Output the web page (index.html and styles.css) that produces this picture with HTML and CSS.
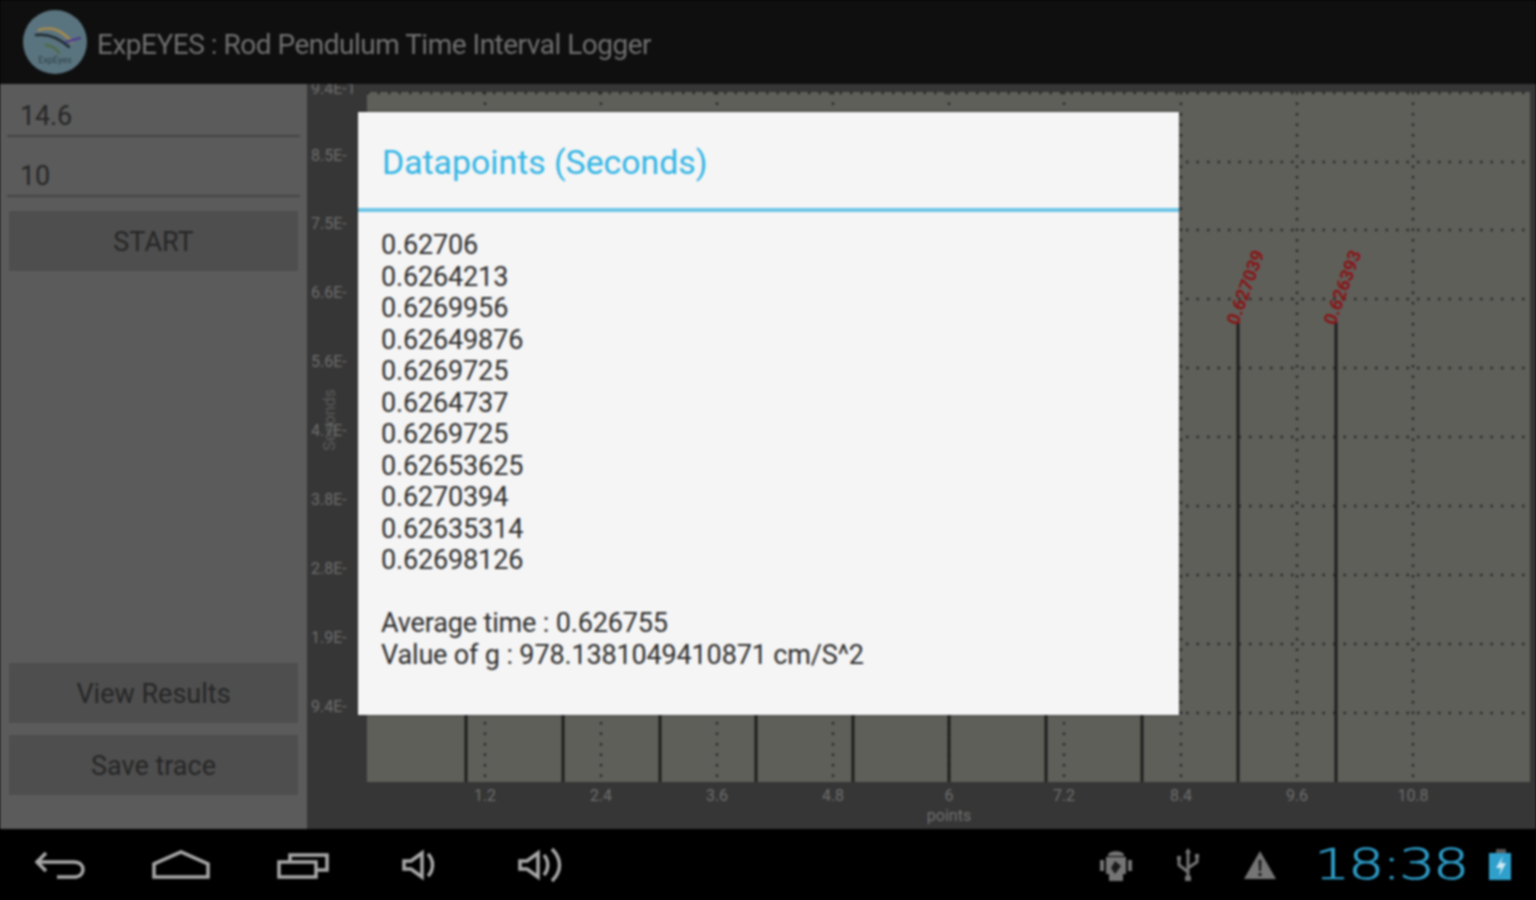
FILE: index.html
```html
<!DOCTYPE html>
<html lang="en">
<head>
    <meta charset="UTF-8">
    <meta name="viewport" content="width=device-width, initial-scale=1.0">
    <title>ExpEYES : Rod Pendulum Time Interval Logger</title>
    <link rel="stylesheet" href="styles.css">
</head>
<body>

<div class="screen">
    <header class="action-bar">
        <svg class="app-logo" viewBox="0 0 66 66">
            <circle cx="33" cy="33" r="32" fill="#5a747f"/>
            <path class="wing wing-orange" d="M17 21 C32 16 42 24 50 33"/>
            <path class="wing wing-dark" d="M14 26 C28 24 38 30 47 38"/>
            <path class="wing wing-purple" d="M44 33 L58 29"/>
            <path class="wing wing-green" d="M24 36 C30 37 35 40 37 44"/>
            <text class="logo-text" x="33" y="54">ExpEyes</text>
        </svg>
        <h1 class="app-title">ExpEYES : Rod Pendulum Time Interval Logger</h1>
    </header>

    <main class="content">
        <aside class="side-panel">
            <div class="field">14.6</div>
            <div class="field">10</div>
            <button class="panel-btn start-btn">START</button>
            <button class="panel-btn results-btn">View Results</button>
            <button class="panel-btn">Save trace</button>
        </aside>

        <section class="chart">
            <svg class="chart-svg" viewBox="307 84 1229 745">
                <rect class="plot" x="367" y="92" width="1163" height="690"/>

                <path class="grid" d="M367 93H1530M367 162H1530M367 230H1530M367 299H1530M367 368H1530M367 437H1530M367 506H1530M367 575H1530M367 644H1530M367 713H1530"/>
                <path class="grid" d="M485 92V782M601 92V782M717 92V782M833 92V782M949 92V782M1064 92V782M1181 92V782M1297 92V782M1413 92V782"/>

                <path class="bar" d="M466 322V782M563 322V782M660 322V782M756 322V782M853 322V782M949 322V782M1046 322V782M1142 322V782M1238 322V782M1336 322V782"/>

                <text class="peak" transform="translate(1238 326) rotate(-70)">0.627039</text>
                <text class="peak" transform="translate(1335 326) rotate(-70)">0.626393</text>

                <text class="tick" x="311" y="94">9.4E-1</text>
                <text class="tick" x="311" y="161">8.5E-</text>
                <text class="tick" x="311" y="229">7.5E-</text>
                <text class="tick" x="311" y="298">6.6E-</text>
                <text class="tick" x="311" y="367">5.6E-</text>
                <text class="tick" x="311" y="436">4.7E-</text>
                <text class="tick" x="311" y="505">3.8E-</text>
                <text class="tick" x="311" y="574">2.8E-</text>
                <text class="tick" x="311" y="643">1.9E-</text>
                <text class="tick" x="311" y="712">9.4E-</text>

                <text class="tick mid" x="485" y="801">1.2</text>
                <text class="tick mid" x="601" y="801">2.4</text>
                <text class="tick mid" x="717" y="801">3.6</text>
                <text class="tick mid" x="833" y="801">4.8</text>
                <text class="tick mid" x="949" y="801">6</text>
                <text class="tick mid" x="1064" y="801">7.2</text>
                <text class="tick mid" x="1181" y="801">8.4</text>
                <text class="tick mid" x="1297" y="801">9.6</text>
                <text class="tick mid" x="1413" y="801">10.8</text>

                <text class="tick mid" x="949" y="821">points</text>
                <text class="axis-name mid" transform="translate(335 420) rotate(-90)">Seconds</text>
            </svg>
        </section>

        <div class="dialog">
            <h2 class="dialog-title">Datapoints (Seconds)</h2>
            <div class="dialog-body">
                <p>0.62706</p>
                <p>0.6264213</p>
                <p>0.6269956</p>
                <p>0.62649876</p>
                <p>0.6269725</p>
                <p>0.6264737</p>
                <p>0.6269725</p>
                <p>0.62653625</p>
                <p>0.6270394</p>
                <p>0.62635314</p>
                <p>0.62698126</p>
                <p class="blank">&nbsp;</p>
                <p>Average time : 0.626755</p>
                <p>Value of g : 978.1381049410871 cm/S^2</p>
            </div>
        </div>
    </main>

    <footer class="nav-bar">
        <div class="nav-left">
            <svg class="nav-icon" width="50" height="30" viewBox="0 0 50 30">
                <path d="M11 3L2 12L11 21M2 12H39C51 12 51 27 39 27H22"/>
            </svg>
            <svg class="nav-icon" width="58" height="30" viewBox="0 0 58 30">
                <path d="M2 27V14L29 2L56 14V27Z"/>
            </svg>
            <svg class="nav-icon" width="54" height="30" viewBox="0 0 54 30">
                <path d="M2 12H39V27H2ZM13 11V5H50V20H40"/>
            </svg>
            <svg class="nav-icon vol-down" width="36" height="32" viewBox="0 0 36 32">
                <path d="M2 12H9L20 4V28L9 20H2Z"/>
                <path d="M26 5C32 11 32 21 26 27"/>
            </svg>
            <svg class="nav-icon vol-up" width="46" height="36" viewBox="0 0 46 36">
                <path d="M2 14H9L20 6V30L9 22H2Z"/>
                <path d="M26 8C31 14 31 22 26 28"/>
                <path d="M34 2C44 12 44 24 34 34"/>
            </svg>
        </div>
        <div class="nav-right">
            <svg class="status-icon" width="34" height="36" viewBox="0 0 34 36">
                <path class="status-fill" d="M9 8C10 3 24 3 25 8V9H9ZM7 10H27V27H24V34H10V27H7ZM1 13H5V24H1ZM29 13H33V24H29Z"/>
                <path class="status-cut" d="M16 14L22 19L16 27L12 21Z"/>
            </svg>
            <svg class="status-icon" width="24" height="36" viewBox="0 0 24 36">
                <path class="status-line" d="M12 3V32M12 25L3 18V12M12 21L21 15V10"/>
                <path class="status-fill" d="M12 1L15 6H9ZM1 9H5V13H1ZM19 7H23V11H19ZM9 29H15V34H9Z"/>
            </svg>
            <svg class="status-icon" width="34" height="30" viewBox="0 0 34 30">
                <path class="status-fill" d="M17 1L33 29H1Z"/>
                <path class="status-cut" d="M15.500 10H18.500L18 21H16ZM15.500 23H18.500V26H15.500Z"/>
            </svg>
            <span class="clock"><span class="clock-text">18:38</span></span>
            <svg class="status-icon" width="26" height="34" viewBox="0 0 26 34">
                <path class="battery-cap" d="M8 1H18V5H8Z"/>
                <path class="battery" d="M1 5H23V32H1Z"/>
                <path class="bolt" d="M15 8L8 20H13L11 28L18 15H13Z"/>
            </svg>
        </div>
    </footer>
</div>

</body>
</html>
```

FILE: styles.css
```css
* {
    box-sizing: border-box;
}
html, body {
    margin: 0;
    height: 100%;
    background: #000;
}
body {
    font-family: Roboto, "Liberation Sans", sans-serif;
    overflow: hidden;
}
.screen {
    width: 1536px;
    height: 900px;
    display: flex;
    flex-direction: column;
    filter: blur(0.9px);
}

/* top bar */
.action-bar {
    height: 84px;
    flex: none;
    background-color: #0f0f0f;
    display: flex;
    align-items: center;
    padding-left: 22px;
    gap: 9px;
}
.app-logo {
    width: 66px;
    height: 66px;
}
.wing {
    fill: none;
    stroke-width: 2.5;
    stroke-linecap: round;
}
.wing-orange { stroke: #a98a4c; }
.wing-dark { stroke: #1f2a30; }
.wing-purple { stroke: #4d3f90; }
.wing-green { stroke: #4f6a45; }
.logo-text {
    font-size: 9px;
    fill: #2c3f48;
    text-anchor: middle;
}
.app-title {
    margin: 4px 0 0;
    font-size: 28px;
    font-weight: 400;
    letter-spacing: -0.5px;
    color: #707070;
}

/* main area */
.content {
    flex: 1;
    display: flex;
    position: relative;
    min-height: 0;
}
.side-panel {
    width: 307px;
    flex: none;
    background-color: #5b5b5b;
    display: flex;
    flex-direction: column;
    padding: 7px 7px 20px;
}
.field {
    height: 46px;
    margin: 0 0 14px;
    padding: 10px 0 0 13px;
    font-size: 27px;
    line-height: 31px;
    letter-spacing: -0.15px;
    color: #262626;
    border-bottom: 2px solid #444;
}
.panel-btn {
    height: 60px;
    width: 289px;
    margin: 0 0 14px 2px;
    border: none;
    background-color: #4e4e4e;
    color: #262626;
    font-family: inherit;
    font-size: 27px;
    padding: 2px 0 0;
}
.start-btn {
    margin-top: 0;
}
.results-btn {
    margin-top: auto;
    margin-bottom: 12px;
}
.chart {
    flex: 1;
    background-color: #363636;
}
.chart-svg {
    display: block;
    width: 1229px;
    height: 745px;
}
.plot {
    fill: #5f5f5a;
}
.grid {
    fill: none;
    stroke: #2a2a2a;
    stroke-width: 2.5;
    stroke-dasharray: 2.5 8;
}
.bar {
    fill: none;
    stroke: #1d1d1d;
    stroke-width: 3;
}
.peak {
    font-size: 18px;
    font-weight: 700;
    fill: #8a1214;
}
.tick {
    font-size: 16px;
    fill: #6e6e6e;
}
.axis-name {
    font-size: 16px;
    fill: #5a5a5a;
}
.mid {
    text-anchor: middle;
}

/* popup */
.dialog {
    position: absolute;
    left: 358px;
    top: 28px;
    width: 821px;
    height: 603px;
    background-color: #f5f5f5;
    box-shadow: 0 0 2px #222;
}
.dialog-title {
    margin: 0;
    height: 100px;
    padding: 29px 0 0 24px;
    font-size: 33.800px;
    line-height: 44px;
    font-weight: 400;
    color: #33b5e5;
    border-bottom: 4px solid #6cc5e6;
}
.dialog-body {
    padding: 18px 0 0 23px;
    font-size: 27px;
    line-height: 31.5px;
    letter-spacing: -0.15px;
    color: #2e2e2e;
}
.dialog-body p {
    margin: 0;
}

/* bottom bar */
.nav-bar {
    height: 71px;
    flex: none;
    background-color: #000;
    display: flex;
    align-items: center;
    justify-content: space-between;
    padding: 0 22px 0 35px;
}
.nav-left {
    display: flex;
    align-items: center;
    gap: 67px;
}
.nav-icon {
    fill: none;
    stroke: #a8a8a8;
    stroke-width: 3.5;
}
.vol-down {
    margin-left: 4px;
}
.vol-up {
    margin-left: 13px;
}
.nav-right {
    display: flex;
    align-items: center;
    gap: 43px;
}
.status-fill {
    fill: #757575;
}
.status-line {
    fill: none;
    stroke: #757575;
    stroke-width: 3;
}
.status-cut {
    fill: #1a1a1a;
}
.clock {
    width: 148px;
    margin: 0 -17px 0 -6px;
    display: block;
}
.clock-text {
    display: block;
    font-family: "DejaVu Sans", sans-serif;
    font-size: 42px;
    font-weight: 200;
    line-height: 44px;
    letter-spacing: -1.7px;
    color: #2f9fcb;
    -webkit-text-stroke: 0.6px #2f9fcb;
    transform: scaleX(1.36);
    transform-origin: left center;
}
.battery {
    fill: #2f9fcb;
}
.battery-cap {
    fill: #555;
}
.bolt {
    fill: #cfeaf5;
}
```
